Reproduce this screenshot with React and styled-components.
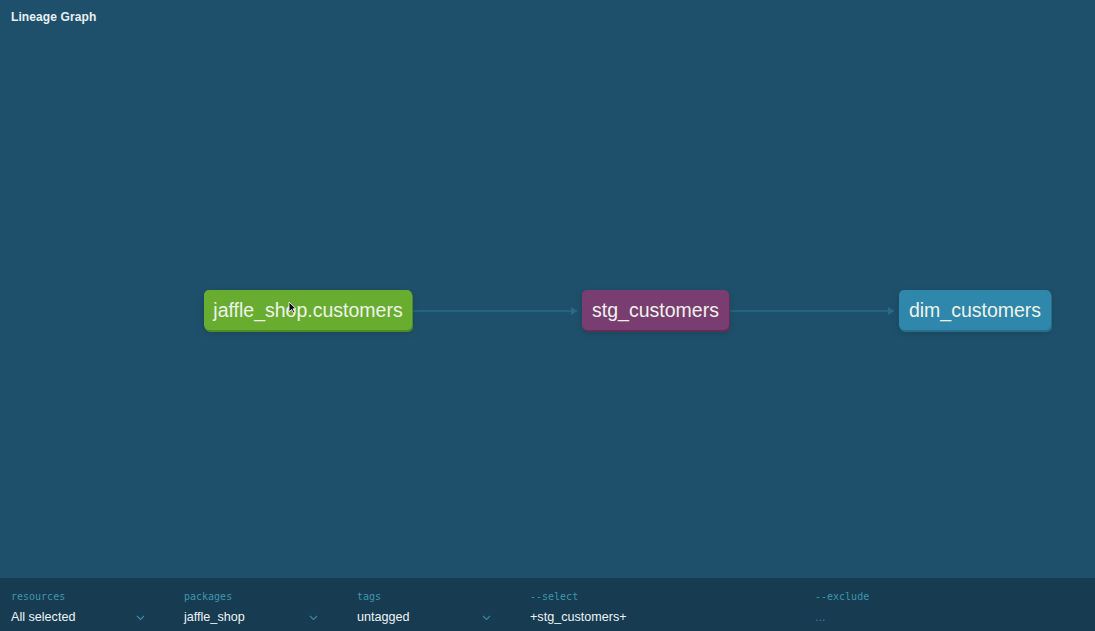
import React from "react";
import styled, { createGlobalStyle } from "styled-components";

const GlobalStyle = createGlobalStyle`
  html, body {
    margin: 0;
    padding: 0;
    background: #1f506b;
  }
  body {
    font-family: "Liberation Sans", Arial, sans-serif;
  }
`;

const nodes = [
  { id: "src", label: "jaffle_shop.customers", x: 204, w: 208, color: "#69ad30", edge: "#4f8a24" },
  { id: "stg", label: "stg_customers", x: 582, w: 147, color: "#7a3d71", edge: "#5f2f58" },
  { id: "dim", label: "dim_customers", x: 899, w: 152, color: "#2f87ab", edge: "#256e8d" },
];

const edges = [
  { from: 413, to: 577 },
  { from: 730, to: 894 },
];

const filters = [
  { label: "resources", value: "All selected", select: true, width: 173 },
  { label: "packages", value: "jaffle_shop", select: true, width: 173 },
  { label: "tags", value: "untagged", select: true, width: 173 },
  { label: "--select", value: "+stg_customers+", width: 285 },
  { label: "--exclude", value: "...", muted: true, width: 250 },
];

const Page = styled.div`
  display: flex;
  flex-direction: column;
  width: 1095px;
  height: 631px;
  overflow: hidden;
`;

const Canvas = styled.div`
  position: relative;
  flex: 1;
  background: #1f506b;
`;

const Title = styled.h1`
  margin: 0;
  padding: 10px 11px;
  font-size: 12px;
  font-weight: bold;
  color: #e8f0f4;
  letter-spacing: 0.1px;
`;

const Node = styled.div`
  position: absolute;
  top: 290px;
  height: 40px;
  display: flex;
  align-items: center;
  justify-content: center;
  box-sizing: border-box;
  border-radius: 5px;
  background: ${(p) => p.$color};
  box-shadow: 1px 2px 0 ${(p) => p.$edge}, 0 3px 6px rgba(10, 30, 45, 0.25);
  color: #eef3ea;
  font-size: 19.5px;
  white-space: nowrap;
`;

const EdgeLayer = styled.svg`
  position: absolute;
  left: 0;
  top: 0;
  width: 100%;
  height: 100%;
  pointer-events: none;
`;

const Cursor = styled.svg`
  position: absolute;
  left: 288px;
  top: 301px;
`;

const Toolbar = styled.div`
  display: flex;
  height: 53px;
  box-sizing: border-box;
  padding: 12px 0 0 11px;
  background: #173b51;
`;

const Filter = styled.div`
  display: flex;
  flex-direction: column;
  width: ${(p) => p.$width}px;
  flex-shrink: 0;
`;

const FilterLabel = styled.div`
  font-family: "DejaVu Sans Mono", "Liberation Mono", monospace;
  font-size: 10px;
  line-height: 14px;
  color: #3d97ad;
`;

const FilterValue = styled.div`
  display: flex;
  align-items: center;
  width: 134px;
  margin-top: 6px;
  font-size: 12.6px;
  line-height: 15px;
  color: ${(p) => (p.$muted ? "#3f7d94" : "#eef3f6")};
`;

const ValueText = styled.span`
  flex: 1;
`;

const Chevron = styled.svg`
  flex-shrink: 0;
`;

export default function App() {
  return (
    <Page>
      <GlobalStyle />
      <Canvas>
        <Title>Lineage Graph</Title>
        <EdgeLayer>
          {edges.map((e, i) => (
            <g key={i} stroke="#2b6984" fill="none" strokeWidth="1.6">
              <line x1={e.from} y1="311" x2={e.to} y2="311" />
              <path d={`M${e.to - 6} 307 L${e.to} 311 L${e.to - 6} 315`} fill="#2b6984" stroke="none" />
            </g>
          ))}
        </EdgeLayer>
        {nodes.map((n) => (
          <Node key={n.id} $color={n.color} $edge={n.edge} style={{ left: n.x, width: n.w }}>
            {n.label}
          </Node>
        ))}
        <Cursor width="9" height="13" viewBox="0 0 9 13">
          <path d="M1 1 L1 11 L3.5 8.5 L5.5 12 L7 11.2 L5 7.8 L8 7.8 Z" fill="#111" stroke="#fff" strokeWidth="0.8" />
        </Cursor>
      </Canvas>
      <Toolbar>
        {filters.map((f) => (
          <Filter key={f.label} $width={f.width}>
            <FilterLabel>{f.label}</FilterLabel>
            <FilterValue $muted={f.muted}>
              <ValueText>{f.value}</ValueText>
              {f.select && (
                <Chevron width="9" height="6" viewBox="0 0 9 6">
                  <path d="M1 1 L4.5 4.5 L8 1" fill="none" stroke="#3d8aa3" strokeWidth="1.1" />
                </Chevron>
              )}
            </FilterValue>
          </Filter>
        ))}
      </Toolbar>
    </Page>
  );
}
